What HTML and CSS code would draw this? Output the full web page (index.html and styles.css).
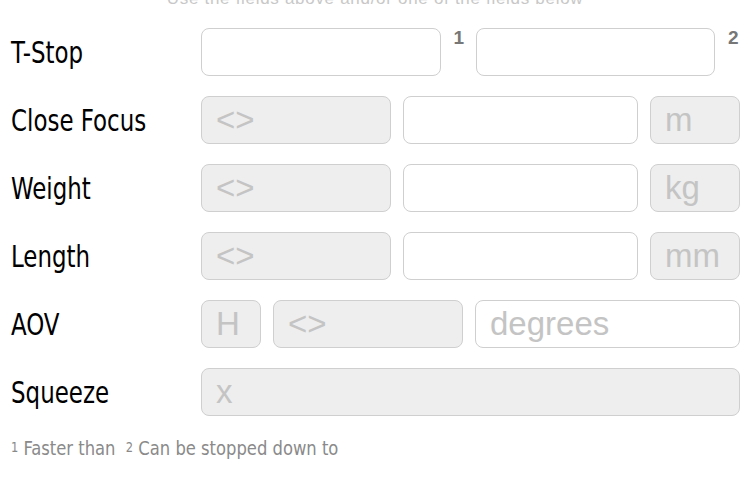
FILE: index.html
```html
<!DOCTYPE html>
<html>
<head>
<meta charset="utf-8">
<link rel="stylesheet" href="styles.css">
</head>
<body>
<div class="page">
  <div class="hint">Use the fields above and/or one of the fields below</div>
  <div class="form">
    <div class="row">
      <div class="label">T-Stop</div>
      <div class="fields pair">
        <div class="group"><div class="field"></div><span class="sup">1</span></div>
        <div class="group"><div class="field"></div><span class="sup">2</span></div>
      </div>
    </div>
    <div class="row">
      <div class="label">Close Focus</div>
      <div class="fields">
        <div class="field gray w190"><span class="ph">&lt;&gt;</span></div>
        <div class="field flex"></div>
        <div class="field gray w90"><span class="ph">m</span></div>
      </div>
    </div>
    <div class="row">
      <div class="label">Weight</div>
      <div class="fields">
        <div class="field gray w190"><span class="ph">&lt;&gt;</span></div>
        <div class="field flex"></div>
        <div class="field gray w90"><span class="ph">kg</span></div>
      </div>
    </div>
    <div class="row">
      <div class="label">Length</div>
      <div class="fields">
        <div class="field gray w190"><span class="ph">&lt;&gt;</span></div>
        <div class="field flex"></div>
        <div class="field gray w90"><span class="ph">mm</span></div>
      </div>
    </div>
    <div class="row">
      <div class="label">AOV</div>
      <div class="fields">
        <div class="field gray w60"><span class="ph">H</span></div>
        <div class="field gray w190"><span class="ph">&lt;&gt;</span></div>
        <div class="field flex"><span class="ph">degrees</span></div>
      </div>
    </div>
    <div class="row">
      <div class="label">Squeeze</div>
      <div class="fields">
        <div class="field gray flex"><span class="ph">x</span></div>
      </div>
    </div>
  </div>
  <div class="notes"><span class="notes-text"><span class="fn">1</span> Faster than &nbsp;<span class="fn">2</span> Can be stopped down to</span></div>
</div>
</body>
</html>
```

FILE: styles.css
```css
html, body {
  margin: 0;
  padding: 0;
  background: #ffffff;
}
.page {
  width: 750px;
  height: 485px;
  overflow: hidden;
  font-family: "DejaVu Sans Condensed", "Liberation Sans", sans-serif;
}
.hint {
  font-family: "Liberation Sans", Arial, sans-serif;
  font-size: 17px;
  line-height: 20px;
  color: #c8c8c8;
  text-align: center;
  letter-spacing: 0.7px;
  margin-top: -11px;
  height: 20px;
  margin-bottom: 19px;
  white-space: nowrap;
}
.form {
  display: flex;
  flex-direction: column;
  gap: 20px;
  padding: 0 10px 0 11px;
}
.row {
  display: flex;
  align-items: center;
  height: 48px;
}
.label {
  width: 190px;
  flex: none;
  font-size: 30px;
  color: #000;
  white-space: nowrap;
  transform: scaleX(0.85);
  transform-origin: left center;
}
.fields {
  flex: 1;
  display: flex;
  gap: 12px;
  height: 48px;
}
.fields.pair {
  gap: 10px;
}
.group {
  flex: 1;
  display: flex;
}
.group .field {
  flex: 1;
}
.sup {
  width: 25px;
  flex: none;
  box-sizing: border-box;
  padding-left: 13px;
  font-family: "Liberation Sans", Arial, sans-serif;
  font-weight: bold;
  font-size: 19px;
  line-height: 19px;
  color: #777;
}
.field {
  box-sizing: border-box;
  height: 48px;
  border: 1px solid #cfcfcf;
  border-radius: 8px;
  background: #fff;
  display: flex;
  align-items: center;
  padding-left: 14px;
  font-family: "Liberation Sans", Arial, sans-serif;
  font-size: 33px;
}
.field.gray {
  background: #eeeeee;
}
.w190 {
  width: 190px;
  flex: none;
}
.w90 {
  width: 90px;
  flex: none;
}
.w60 {
  width: 60px;
  flex: none;
}
.flex {
  flex: 1;
}
.ph {
  color: #c4c4c4;
}
.notes {
  margin-top: 20px;
  padding-left: 11px;
  font-size: 20px;
  color: #8a8a8a;
  white-space: nowrap;
}
.notes-text {
  display: inline-block;
  transform: scaleX(0.91);
  transform-origin: left center;
}
.fn {
  font-size: 14px;
  vertical-align: 3px;
}
```
